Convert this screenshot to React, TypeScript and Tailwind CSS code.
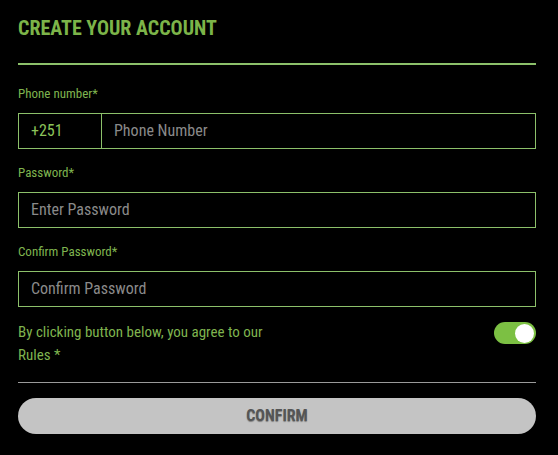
import React from "react";

export default function App() {
  const font = { fontFamily: '"Roboto Condensed", Roboto, "Liberation Sans", sans-serif', fontStretch: "condensed" as const };
  return (
    <div className="w-[558px] h-[455px] bg-black pl-[18px] pr-[22px] pt-[14px]" style={font}>
      <h1 className="text-[20px] leading-[28px] font-bold text-[#7cb449] uppercase">Create your account</h1>
      <div className="mt-[21px] h-[2px] bg-[#8cc06a]" />

      <label className="block mt-[21px] text-[13px] leading-[16px] text-[#7fb44f]">Phone number*</label>
      <div className="mt-[11px] h-[36px] flex border border-[#8cc06a]">
        <div className="w-[83px] border-r border-[#8cc06a] flex items-center pl-[12px] text-[16px] text-[#8cc45a]">+251</div>
        <div className="flex-1 flex items-center pl-[12px] text-[16px] text-[#8a8a8a]">Phone Number</div>
      </div>

      <label className="block mt-[16px] text-[13px] leading-[16px] text-[#7fb44f]">Password*</label>
      <div className="mt-[11px] h-[36px] flex items-center border border-[#8cc06a] pl-[12px] text-[16px] text-[#8a8a8a]">Enter Password</div>

      <label className="block mt-[16px] text-[13px] leading-[16px] text-[#7fb44f]">Confirm Password*</label>
      <div className="mt-[11px] h-[36px] flex items-center border border-[#8cc06a] pl-[12px] text-[16px] text-[#8a8a8a]">Confirm Password</div>

      <div className="mt-[14px] flex justify-between items-start">
        <p className="w-[262px] text-[15px] leading-[23px] text-[#7fb44f]">By clicking button below, you agree to our Rules *</p>
        <div className="mt-[1px] w-[42px] h-[22px] rounded-full bg-[#7cc043] flex items-center justify-end pr-[2px]">
          <div className="w-[19px] h-[19px] rounded-full bg-white" />
        </div>
      </div>

      <div className="mt-[15px] h-px bg-[#9a9a9a]" />

      <button className="mt-[15px] w-full h-[36px] rounded-full bg-[#c4c4c4] text-[16px] font-bold text-[#555555] uppercase [text-shadow:0_1px_1px_rgba(0,0,0,0.35)]">
        Confirm
      </button>
    </div>
  );
}
